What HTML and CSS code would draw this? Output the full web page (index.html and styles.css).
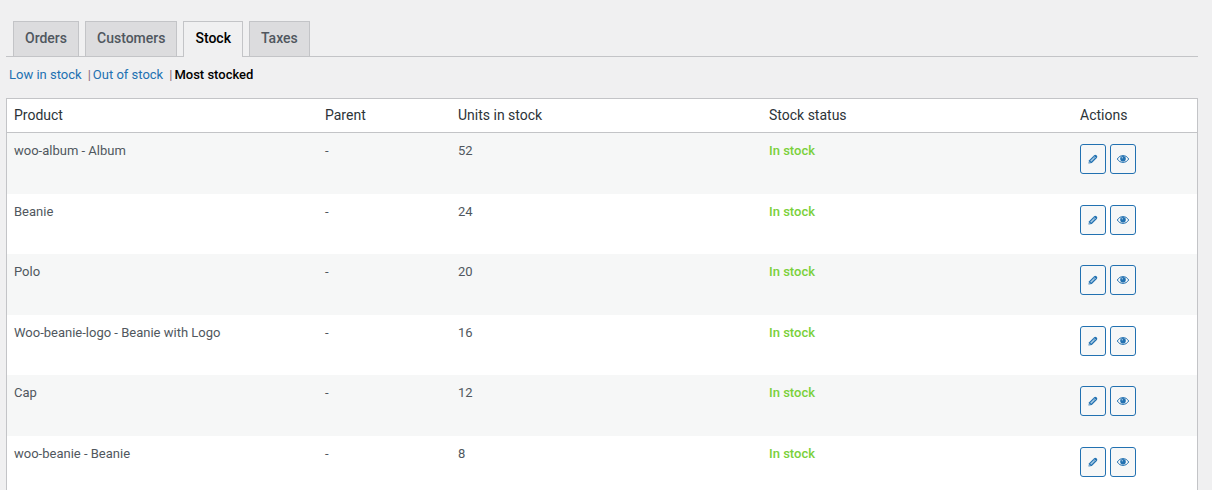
FILE: index.html
```html
<!DOCTYPE html>
<html lang="en">
<head>
<meta charset="UTF-8" />
<meta name="viewport" content="width=device-width, initial-scale=1.0" />
<title>Reports – Stock</title>
<link rel="stylesheet" href="styles.css">
</head>
<body>
  <!-- icons shared by every row -->
  <svg class="sprite" aria-hidden="true">
    <symbol id="icon-edit" viewBox="0 0 10 10">
      <path d="M.5 9.500 1.100 6.200 6.100 1.200a1.700 1.700 0 0 1 2.300 0l.4.4a1.700 1.700 0 0 1 0 2.300L3.800 8.900z" fill="currentColor" />
      <path d="M2.700 7.300 6.500 3.500" stroke="#a9cbe4" stroke-width="1.500" />
      <path d="m6.100 2.300 1.600 1.600" stroke="#f6f7f7" stroke-width=".6" />
      <path d="m1.300 8.700.3-1.200.9.900z" fill="#f6f7f7" />
    </symbol>
    <symbol id="icon-view" viewBox="0 0 12 8">
      <path d="M.3 4C1.800 1.600 3.700.6 6 .6S10.200 1.600 11.700 4C10.200 6.400 8.300 7.400 6 7.400S1.800 6.400.3 4z" fill="none" stroke="currentColor" stroke-width="1" />
      <circle cx="6" cy="3.700" r="2.800" fill="currentColor" />
      <circle cx="5.300" cy="2.700" r=".7" fill="#a9cbe4" />
    </symbol>
  </svg>

  <main class="wrap">
    <nav class="tabs">
      <a href="#orders" class="tab">Orders</a>
      <a href="#customers" class="tab">Customers</a>
      <a href="#stock" class="tab active">Stock</a>
      <a href="#taxes" class="tab">Taxes</a>
    </nav>

    <ul class="subnav">
      <li><a href="#low">Low in stock</a></li>
      <li><a href="#out">Out of stock</a></li>
      <li><a href="#most" class="current">Most stocked</a></li>
    </ul>

    <table class="stock">
      <thead>
        <tr>
          <th scope="col" class="col-product">Product</th>
          <th scope="col" class="col-parent">Parent</th>
          <th scope="col" class="col-units">Units in stock</th>
          <th scope="col" class="col-status">Stock status</th>
          <th scope="col" class="col-actions">Actions</th>
        </tr>
      </thead>
      <tbody>
        <tr>
          <td>woo-album - Album</td><td>-</td><td>52</td><td><span class="in-stock">In stock</span></td>
          <td><div class="actions">
            <a href="#edit" class="btn" aria-label="Edit"><svg class="edit"><use href="#icon-edit" /></svg></a>
            <a href="#view" class="btn" aria-label="View"><svg class="view"><use href="#icon-view" /></svg></a>
          </div></td>
        </tr>
        <tr>
          <td>Beanie</td><td>-</td><td>24</td><td><span class="in-stock">In stock</span></td>
          <td><div class="actions">
            <a href="#edit" class="btn" aria-label="Edit"><svg class="edit"><use href="#icon-edit" /></svg></a>
            <a href="#view" class="btn" aria-label="View"><svg class="view"><use href="#icon-view" /></svg></a>
          </div></td>
        </tr>
        <tr>
          <td>Polo</td><td>-</td><td>20</td><td><span class="in-stock">In stock</span></td>
          <td><div class="actions">
            <a href="#edit" class="btn" aria-label="Edit"><svg class="edit"><use href="#icon-edit" /></svg></a>
            <a href="#view" class="btn" aria-label="View"><svg class="view"><use href="#icon-view" /></svg></a>
          </div></td>
        </tr>
        <tr>
          <td>Woo-beanie-logo - Beanie with Logo</td><td>-</td><td>16</td><td><span class="in-stock">In stock</span></td>
          <td><div class="actions">
            <a href="#edit" class="btn" aria-label="Edit"><svg class="edit"><use href="#icon-edit" /></svg></a>
            <a href="#view" class="btn" aria-label="View"><svg class="view"><use href="#icon-view" /></svg></a>
          </div></td>
        </tr>
        <tr>
          <td>Cap</td><td>-</td><td>12</td><td><span class="in-stock">In stock</span></td>
          <td><div class="actions">
            <a href="#edit" class="btn" aria-label="Edit"><svg class="edit"><use href="#icon-edit" /></svg></a>
            <a href="#view" class="btn" aria-label="View"><svg class="view"><use href="#icon-view" /></svg></a>
          </div></td>
        </tr>
        <tr>
          <td>woo-beanie - Beanie</td><td>-</td><td>8</td><td><span class="in-stock">In stock</span></td>
          <td><div class="actions">
            <a href="#edit" class="btn" aria-label="Edit"><svg class="edit"><use href="#icon-edit" /></svg></a>
            <a href="#view" class="btn" aria-label="View"><svg class="view"><use href="#icon-view" /></svg></a>
          </div></td>
        </tr>
      </tbody>
    </table>
  </main>
</body>
</html>
```
FILE: styles.css
```css
:root {
  --blue: #2271b1;
  --text: #50575e;
  --dark: #2c3338;
  --line: #c3c4c7;
  --bg: #f0f0f1;
  --stripe: #f6f7f7;
}
* { box-sizing: border-box; margin: 0; padding: 0; }
body { background: var(--bg); color: var(--text); font-family: Roboto, sans-serif; font-size: 13px; line-height: 20px; }
a { color: var(--blue); text-decoration: none; }
.sprite { display: none; }
.wrap { padding: 21px 14px 0 6px; }

/* === tabs === */
.tabs { display: flex; gap: 6px; padding-left: 7px; border-bottom: 1px solid var(--line); }
.tab { padding: 4px 11px 6px; border: 1px solid var(--line); border-bottom: 0; background: #dcdcde; color: var(--text); font-size: 14px; font-weight: 500; line-height: 24px; }
.tab.active { margin-bottom: -1px; background: var(--bg); color: #000; }

/* === filter links === */
.subnav { display: flex; gap: 6px; padding: 8px 3px 13px; list-style: none; }
.subnav li + li::before { content: "|"; margin-right: 2px; color: #8c6a78; }
.subnav .current { color: #000; font-weight: 500; }

/* === table === */
.stock { width: 100%; border: 1px solid var(--line); border-spacing: 0; table-layout: fixed; background: #fff; }
.stock th { padding: 6px 7px 7px; border-bottom: 1px solid var(--line); color: var(--dark); font-size: 14px; font-weight: 400; text-align: left; }
.stock td { padding: 8px 7px; vertical-align: top; }
.stock tbody tr { height: 60px; }
.stock tbody tr:nth-child(odd) { height: 61px; background: var(--stripe); }
.col-parent { width: 133px; }
.col-actions { width: 124px; }
.in-stock { color: #7ad03a; font-weight: 500; }

.actions { display: flex; gap: 4px; padding-top: 3px; }
.btn { display: flex; align-items: center; justify-content: center; width: 26px; height: 30px; border: 1px solid var(--blue); border-radius: 3px; background: var(--stripe); color: var(--blue); }
.btn .edit { width: 10px; height: 10px; }
.btn .view { width: 12px; height: 8px; }
```
